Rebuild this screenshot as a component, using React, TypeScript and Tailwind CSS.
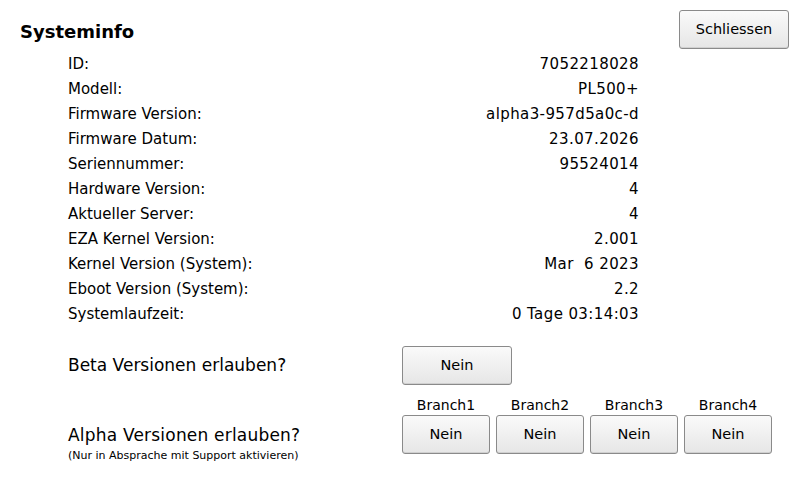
const rows: [string, string][] = [
  ['ID:', '7052218028'],
  ['Modell:', 'PL500+'],
  ['Firmware Version:', 'alpha3-957d5a0c-d'],
  ['Firmware Datum:', '23.07.2026'],
  ['Seriennummer:', '95524014'],
  ['Hardware Version:', '4'],
  ['Aktueller Server:', '4'],
  ['EZA Kernel Version:', '2.001'],
  ['Kernel Version (System):', 'Mar\u00a0\u00a06 2023'],
  ['Eboot Version (System):', '2.2'],
  ['Systemlaufzeit:', '0 Tage 03:14:03'],
];

function Btn({ label, w }: { label: string; w: string }) {
  return (
    <button
      className={`${w} h-[39px] rounded-[3px] border border-[#8a8a8a] bg-gradient-to-b from-[#fafafa] to-[#e6e6e6] text-[14.5px] text-black shadow-[inset_0_-1px_0_#d0d0d0]`}
    >
      {label}
    </button>
  );
}

export default function App() {
  return (
    <div
      className="w-[800px] h-[480px] bg-white text-black overflow-hidden"
      style={{ fontFamily: '"DejaVu Sans", Tahoma, sans-serif' }}
    >
      <div className="flex items-start justify-between pl-[20px] pr-[11px] pt-[10px]">
        <h1 className="mt-[8px] text-[18px] font-bold">Systeminfo</h1>
        <Btn label="Schliessen" w="w-[110px]" />
      </div>

      <div className="ml-[68px] w-[571px] mt-[3px] text-[15px]">
        {rows.map(([k, v]) => (
          <div key={k} className="flex h-[25px] items-center justify-between">
            <span>{k}</span>
            <span className="tracking-[0.4px]">{v}</span>
          </div>
        ))}
      </div>

      <div className="ml-[68px] mt-[19px] flex items-center">
        <div className="w-[334px] text-[17px]">Beta Versionen erlauben?</div>
        <Btn label="Nein" w="w-[110px]" />
      </div>

      <div className="ml-[68px] mt-[10px] flex">
        <div className="w-[334px] pt-[29px]">
          <div className="text-[17px] tracking-[0.2px] leading-[22px]">Alpha Versionen erlauben?</div>
          <div className="mt-[3px] text-[11px] leading-[14px]">(Nur in Absprache mit Support aktivieren)</div>
        </div>
        <div className="flex gap-[6px]">
          {['Branch1', 'Branch2', 'Branch3', 'Branch4'].map((b) => (
            <div key={b} className="flex flex-col items-center">
              <div className="text-[14px] leading-[20px]">{b}</div>
              <Btn label="Nein" w="w-[88px]" />
            </div>
          ))}
        </div>
      </div>
    </div>
  );
}
